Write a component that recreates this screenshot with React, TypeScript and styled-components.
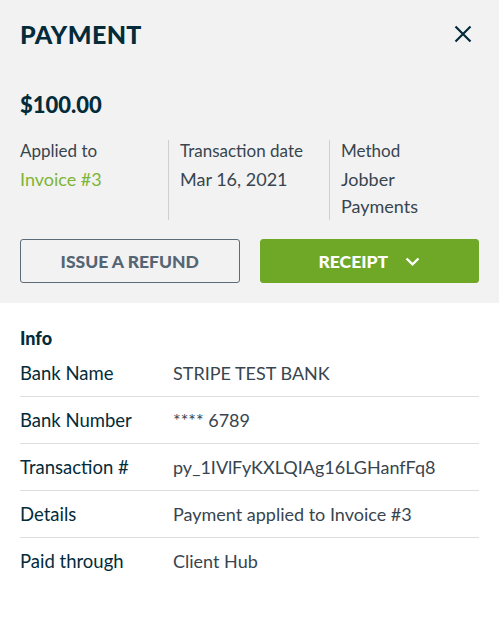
import styled, { createGlobalStyle } from 'styled-components';

const GlobalStyle = createGlobalStyle`
  body {
    margin: 0;
    background: #ffffff;
    font-family: Lato, "Noto Sans", sans-serif;
  }
`;

interface Detail {
  label: string;
  value: string;
}

const details: Detail[] = [
  { label: 'Bank Name', value: 'STRIPE TEST BANK' },
  { label: 'Bank Number', value: '**** 6789' },
  { label: 'Transaction #', value: 'py_1IVlFyKXLQIAg16LGHanfFq8' },
  { label: 'Details', value: 'Payment applied to Invoice #3' },
  { label: 'Paid through', value: 'Client Hub' },
];

const CloseIcon = () => (
  <svg width="18" height="18" viewBox="0 0 18 18" fill="none">
    <path d="M1.5 1.5L16.5 16.5M16.5 1.5L1.5 16.5" stroke="#032b3a" strokeWidth="2.2" />
  </svg>
);

const ChevronIcon = () => (
  <svg width="15" height="9" viewBox="0 0 15 9" fill="none">
    <path d="M1.5 1.5L7.5 7.3L13.5 1.5" stroke="#ffffff" strokeWidth="2.4" />
  </svg>
);

const App = () => {
  return (
    <Panel>
      <GlobalStyle />
      <Summary>
        <TitleRow>
          <Title>PAYMENT</Title>
          <CloseButton aria-label="Close">
            <CloseIcon />
          </CloseButton>
        </TitleRow>
        <Amount>$100.00</Amount>
        <Columns>
          <Column>
            <ColumnLabel>Applied to</ColumnLabel>
            <ColumnValue link>Invoice #3</ColumnValue>
          </Column>
          <Column>
            <ColumnLabel>Transaction date</ColumnLabel>
            <ColumnValue>Mar 16, 2021</ColumnValue>
          </Column>
          <Column>
            <ColumnLabel>Method</ColumnLabel>
            <ColumnValue>Jobber Payments</ColumnValue>
          </Column>
        </Columns>
        <Actions>
          <ActionButton>ISSUE A REFUND</ActionButton>
          <ActionButton primary>
            RECEIPT
            <ChevronIcon />
          </ActionButton>
        </Actions>
      </Summary>
      <Info>
        <InfoTitle>Info</InfoTitle>
        {details.map((d) => (
          <Row key={d.label}>
            <RowLabel>{d.label}</RowLabel>
            <RowValue>{d.value}</RowValue>
          </Row>
        ))}
      </Info>
    </Panel>
  );
};

const Panel = styled.div`
  width: 499px;
  min-height: 621px;
  background: #ffffff;
`;

const Summary = styled.section`
  background: #f2f2f2;
  padding: 20px 20px 20px;
`;

const TitleRow = styled.div`
  display: flex;
  align-items: center;
  justify-content: space-between;
  height: 28px;
`;

const Title = styled.h1`
  margin: 0;
  font-family: Lato, sans-serif;
  font-weight: 900;
  font-size: 25px;
  letter-spacing: 0.4px;
  color: #032b3a;
`;

const CloseButton = styled.button`
  display: flex;
  align-items: center;
  justify-content: center;
  padding: 0;
  margin-right: 7px;
  background: none;
  border: none;
  cursor: pointer;
`;

const Amount = styled.div`
  margin-top: 43px;
  font-weight: 900;
  font-size: 22px;
  line-height: 28px;
  color: #032b3a;
`;

const Columns = styled.div`
  display: grid;
  grid-template-columns: 148px 161px 1fr;
  margin-top: 21px;
`;

const Column = styled.div`
  display: flex;
  flex-direction: column;
  gap: 4px;
  padding: 0 11px;
  min-height: 78px;
  border-left: 1px solid #cfcfcf;

  &:first-child {
    padding-left: 0;
    border-left: none;
  }
`;

const ColumnLabel = styled.span`
  font-size: 17px;
  line-height: 22px;
  color: #38454f;
`;

const ColumnValue = styled.span<{ link?: boolean }>`
  font-size: 18px;
  line-height: 27px;
  color: ${({ link }) => (link ? '#7db534' : '#38454f')};
`;

const Actions = styled.div`
  display: grid;
  grid-template-columns: 1fr 1fr;
  gap: 20px;
  margin-top: 19px;
`;

const ActionButton = styled.button<{ primary?: boolean }>`
  display: flex;
  align-items: center;
  justify-content: center;
  gap: 17px;
  height: 44px;
  padding: 0;
  border-radius: 3px;
  font-family: Lato, sans-serif;
  font-weight: 900;
  font-size: 17.5px;
  letter-spacing: 0;
  cursor: pointer;
  border: 1px solid ${({ primary }) => (primary ? '#6fa827' : '#5c6b78')};
  background: ${({ primary }) => (primary ? '#6fa827' : 'transparent')};
  color: ${({ primary }) => (primary ? '#ffffff' : '#556573')};
`;

const Info = styled.section`
  padding: 24px 20px 20px;
`;

const InfoTitle = styled.h2`
  margin: 0;
  font-weight: 900;
  font-size: 18px;
  line-height: 22px;
  color: #032b3a;
`;

const Row = styled.div`
  display: flex;
  align-items: center;
  height: 46px;
  border-bottom: 1px solid #dedede;

  &:first-of-type {
    height: 47px;
  }

  &:last-child {
    border-bottom: none;
  }
`;

const RowLabel = styled.span`
  width: 153px;
  font-size: 18.5px;
  color: #032b3a;
`;

const RowValue = styled.span`
  font-size: 18px;
  color: #38454f;
`;

export default App;
